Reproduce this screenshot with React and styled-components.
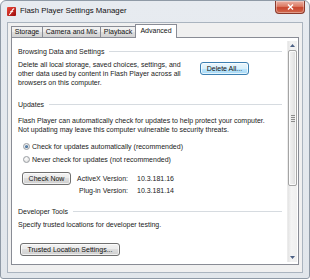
import React from 'react';
import styled, { createGlobalStyle } from 'styled-components';

const Global = createGlobalStyle`
  html, body { margin: 0; padding: 0; background: #ffffff; }
  body { font-family: "Liberation Sans", Arial, sans-serif; color: #1a1a1a; }
  * { box-sizing: border-box; }
`;

const Window = styled.div`
  width: 310px;
  height: 279px;
  border: 1px solid #8f9aa6;
  border-radius: 6px 6px 3px 3px;
  background: linear-gradient(180deg, #e7ebf0 0%, #e1e6eb 100%);
  display: flex;
  flex-direction: column;
  overflow: hidden;
`;

const TitleBar = styled.div`
  height: 21px;
  flex-shrink: 0;
  display: flex;
  align-items: flex-start;
`;

const AppIcon = styled.svg`
  width: 9px;
  height: 9px;
  margin: 6px 0 0 6px;
  flex-shrink: 0;
`;

const Title = styled.div`
  margin: 5px 0 0 4px;
  font-size: 7.8px;
  line-height: 10px;
  color: #111;
  white-space: nowrap;
`;

const CloseButton = styled.div`
  margin-left: auto;
  margin-right: 4px;
  width: 30px;
  height: 13px;
  border: 1px solid #8a3a2c;
  border-top: none;
  border-radius: 0 0 4px 4px;
  background: linear-gradient(180deg, #eab0a3 0%, #dc7a63 45%, #c8462e 55%, #d26a4e 100%);
  display: flex;
  align-items: center;
  justify-content: center;
  box-shadow: inset 0 0 0 1px rgba(255, 255, 255, 0.35);
`;

const Client = styled.div`
  flex: 1;
  margin: 0 6px 5px 6px;
  border: 1px solid #aab4bf;
  background: #f0f0f0;
  padding: 1px 3px 7px 3px;
  display: flex;
  flex-direction: column;
`;

const TabStrip = styled.div`
  height: 14px;
  display: flex;
  align-items: flex-end;
  flex-shrink: 0;
`;

const Tab = styled.div`
  width: ${(p) => p.$w}px;
  height: ${(p) => (p.$active ? 14 : 12)}px;
  margin-left: ${(p) => (p.$first ? 0 : -1)}px;
  border: 1px solid #898c95;
  border-bottom: none;
  background: ${(p) =>
    p.$active ? '#ffffff' : 'linear-gradient(180deg, #f2f2f2 0%, #ebebeb 50%, #dddddd 50%, #cfcfcf 100%)'};
  position: relative;
  z-index: ${(p) => (p.$active ? 2 : 0)};
  font-size: 7px;
  line-height: ${(p) => (p.$active ? 11 : 10)}px;
  text-align: center;
  color: #111;
  white-space: nowrap;
`;

const Panel = styled.div`
  flex: 1;
  margin-top: -1px;
  position: relative;
  z-index: 1;
  background: #ffffff;
  border: 1px solid #898c95;
  padding: 3px 1px 2px 0;
  display: flex;
  min-height: 0;
`;

const Content = styled.div`
  flex: 1;
  padding: 6px 5px 0 6px;
  overflow: hidden;
  font-size: 7px;
  line-height: 9px;
`;

const Header = styled.div`
  display: flex;
  align-items: center;
  height: 9px;
  margin-top: ${(p) => p.$mt || 0}px;
  white-space: nowrap;
  color: #222;
  &::after {
    content: '';
    flex: 1;
    height: 1px;
    margin-left: 5px;
    background: #d6dbe0;
  }
`;

const Row = styled.div`
  display: flex;
  align-items: flex-start;
  margin-top: ${(p) => p.$mt || 0}px;
`;

const Text = styled.div`
  width: ${(p) => (p.$w ? `${p.$w}px` : 'auto')};
  margin-top: ${(p) => p.$mt || 0}px;
  white-space: ${(p) => (p.$nowrap ? 'nowrap' : 'normal')};
  color: #1a1a1a;
`;

const Button = styled.div`
  width: ${(p) => p.$w}px;
  height: 13px;
  margin: ${(p) => p.$m || '0'};
  flex-shrink: 0;
  border: 1px solid ${(p) => (p.$default ? '#3c7fb1' : '#707070')};
  border-radius: 3px;
  background: ${(p) =>
    p.$default
      ? 'linear-gradient(180deg, #eaf6fd 0%, #d9f0fc 50%, #bee6fd 50%, #a7d9f5 100%)'
      : 'linear-gradient(180deg, #f2f2f2 0%, #ebebeb 50%, #dddddd 50%, #cfcfcf 100%)'};
  box-shadow: inset 0 0 0 1px rgba(255, 255, 255, 0.7);
  font-size: 7px;
  line-height: 11px;
  text-align: center;
  color: #111;
  white-space: nowrap;
`;

const RadioRow = styled.div`
  display: flex;
  align-items: center;
  height: 13px;
  padding-left: 5px;
  margin-top: ${(p) => p.$mt || 0}px;
  white-space: nowrap;
`;

const Radio = styled.span`
  width: 7px;
  height: 7px;
  border-radius: 50%;
  border: 1px solid #9a9ea3;
  background: radial-gradient(circle at 40% 35%, #ffffff 0%, #e6e6e6 60%, #cfcfcf 100%);
  margin-right: 2px;
  display: flex;
  align-items: center;
  justify-content: center;
  flex-shrink: 0;
  &::after {
    content: '';
    display: ${(p) => (p.$checked ? 'block' : 'none')};
    width: 3px;
    height: 3px;
    border-radius: 50%;
    background: radial-gradient(circle at 40% 35%, #6f93b8 0%, #1f4f7f 100%);
  }
`;

const VersionGrid = styled.div`
  display: grid;
  grid-template-columns: 51px auto;
  column-gap: 9px;
  grid-auto-rows: 12px;
  align-items: center;
  margin-left: 6px;
  white-space: nowrap;
`;

const Label = styled.div`
  text-align: right;
`;

const ScrollBar = styled.div`
  width: 10px;
  display: flex;
  flex-direction: column;
  background: linear-gradient(90deg, #e4e4e4 0%, #f4f4f4 35%, #efefef 100%);
  border-left: 1px solid #ececec;
`;

const ScrollArrow = styled.div`
  height: 9px;
  flex-shrink: 0;
  display: flex;
  align-items: center;
  justify-content: center;
`;

const Thumb = styled.div`
  height: 136px;
  flex-shrink: 0;
  border: 1px solid #a4a4a4;
  border-radius: 2px;
  background: linear-gradient(90deg, #f3f3f3 0%, #e9e9e9 50%, #dcdcdc 100%);
  box-shadow: inset 0 0 0 1px rgba(255, 255, 255, 0.8);
  display: flex;
  align-items: center;
  justify-content: center;
`;

const Grip = styled.div`
  width: 4px;
  display: flex;
  flex-direction: column;
  gap: 1px;
  & > span {
    display: block;
    height: 1px;
    background: #8c8c8c;
  }
`;

const Spacer = styled.div`
  flex: 1;
`;

const Arrow = ({ up }) => (
  <svg width="5" height="3" viewBox="0 0 5 3">
    <path d={up ? 'M0 3 L2.5 0 L5 3 Z' : 'M0 0 L2.5 3 L5 0 Z'} fill="#4d6185" />
  </svg>
);

export default function App() {
  return (
    <>
      <Global />
      <Window>
        <TitleBar>
          <AppIcon viewBox="0 0 9 9">
            <defs>
              <linearGradient id="fl" x1="0" y1="0" x2="1" y2="1">
                <stop offset="0" stopColor="#f04a3a" />
                <stop offset="1" stopColor="#9a0c0c" />
              </linearGradient>
            </defs>
            <rect x="0" y="0" width="9" height="9" rx="1" fill="url(#fl)" />
            <path d="M2 7.6 C4.2 7.6 4.4 2 7.2 1.6" stroke="#fff" strokeWidth="1.1" fill="none" />
            <path d="M3.2 4.6 H6.2" stroke="#fff" strokeWidth="0.9" />
          </AppIcon>
          <Title>Flash Player Settings Manager</Title>
          <CloseButton>
            <svg width="7" height="6" viewBox="0 0 7 6">
              <path d="M1 0.5 L6 5.5 M6 0.5 L1 5.5" stroke="#fff" strokeWidth="1.4" />
            </svg>
          </CloseButton>
        </TitleBar>
        <Client>
          <TabStrip>
            <Tab $w={32} $first>Storage</Tab>
            <Tab $w={59}>Camera and Mic</Tab>
            <Tab $w={36}>Playback</Tab>
            <Tab $w={42} $active>Advanced</Tab>
          </TabStrip>
          <Panel>
            <Content>
              <Header>Browsing Data and Settings</Header>
              <Row $mt={4}>
                <Text $w={176}>
                  Delete all local storage, saved choices, settings, and other data used by content in
                  Flash Player across all browsers on this computer.
                </Text>
                <Button $default $w={49} $m="2px 0 0 6px">Delete All...</Button>
              </Row>
              <Header $mt={12.5}>Updates</Header>
              <Text $mt={7}>
                Flash Player can automatically check for updates to help protect your computer.
                <br />
                Not updating may leave this computer vulnerable to security threats.
              </Text>
              <RadioRow $mt={6}>
                <Radio $checked />
                Check for updates automatically (recommended)
              </RadioRow>
              <RadioRow>
                <Radio />
                Never check for updates (not recommended)
              </RadioRow>
              <Row $mt={6.5}>
                <Button $w={49} $m="0 0 0 4px">Check Now</Button>
                <VersionGrid>
                  <Label>ActiveX Version:</Label>
                  <div>10.3.181.16</div>
                  <Label>Plug-in Version:</Label>
                  <div>10.3.181.14</div>
                </VersionGrid>
              </Row>
              <Header $mt={10.5}>Developer Tools</Header>
              <Text $mt={4}>Specify trusted locations for developer testing.</Text>
              <Button $w={100} $m="14.5px 0 0 2px">Trusted Location Settings...</Button>
            </Content>
            <ScrollBar>
              <ScrollArrow>
                <Arrow up />
              </ScrollArrow>
              <Thumb>
                <Grip>
                  <span />
                  <span />
                  <span />
                  <span />
                </Grip>
              </Thumb>
              <Spacer />
              <ScrollArrow>
                <Arrow />
              </ScrollArrow>
            </ScrollBar>
          </Panel>
        </Client>
      </Window>
    </>
  );
}
